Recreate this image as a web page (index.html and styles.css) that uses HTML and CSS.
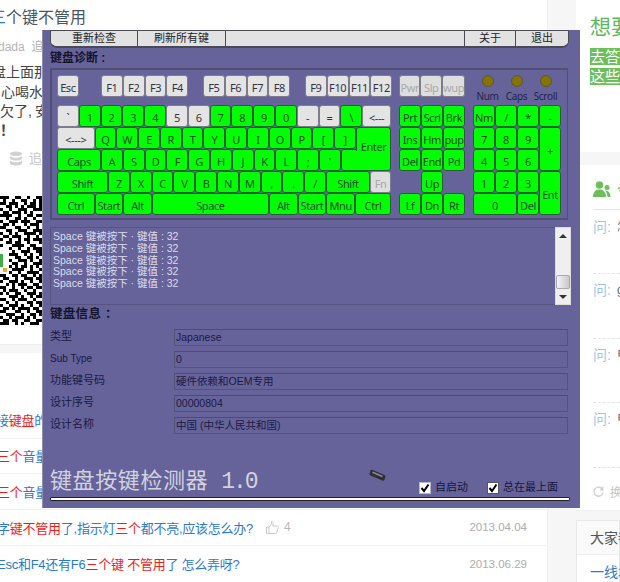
FILE: index.html
```html
<!DOCTYPE html>
<html lang="zh-CN">
<head>
  <meta charset="UTF-8">
  <title>键盘按键检测器</title>
  <link rel="stylesheet" href="styles.css">
</head>
<body>
  <div class="page">
    <main class="main">
      <h1 class="title"><span class="blue">三</span>个键不管用</h1>
      <p class="meta">dada&nbsp;&nbsp;追问</p>
      <div class="para">
        <p class="p1">盘上面那个</p>
        <p class="p2">心喝水不</p>
        <p class="p3">欠了<span class="comma">,</span>安装</p>
        <p class="p4">！</p>
      </div>
      <p class="db">
        <svg width="14" height="15" viewBox="0 0 14 15"><ellipse cx="7" cy="2.8" rx="6" ry="2.3" fill="#d2d2d2"/><path d="M1 5v2.2c0 1.3 2.7 2.300 6 2.300s6-1 6-2.300V5c-1 1.200-3.400 1.800-6 1.800S2 6.200 1 5zM1 9.500v2.700c0 1.300 2.700 2.300 6 2.300s6-1 6-2.300V9.500c-1 1.200-3.400 1.800-6 1.800s-5-.6-6-1.800z" fill="#d2d2d2"/></svg>
        <span>追问</span>
      </p>
      <div class="qr">
        <svg width="42" height="129" viewBox="0 0 42 129" shape-rendering="crispEdges">
          <path fill="none" stroke="#000" stroke-width="3" d="M0 1.500h9M15 1.500h6M27 1.500h3M36 1.500h6M3 4.500h3M12 4.500h3M21 4.500h6M33 4.500h3M39 4.500h3M0 7.500h6M9 7.500h9M24 7.500h3M30 7.500h6M39 7.500h3M6 10.500h6M15 10.500h3M21 10.500h3M27 10.500h9M39 10.500h3M0 13.500h3M9 13.500h3M18 13.500h9M33 13.500h9M3 16.500h6M12 16.500h9M24 16.500h3M30 16.500h3M0 19.500h12M18 19.500h3M27 19.500h6M36 19.500h6M6 22.500h3M15 22.500h6M24 22.500h3M33 22.500h3M0 25.500h3M9 25.500h9M21 25.500h9M36 25.500h6M3 28.500h6M12 28.500h3M24 28.500h3M30 28.500h9M0 31.500h6M15 31.500h6M27 31.500h3M36 31.500h3M6 34.500h6M18 34.500h9M33 34.500h9M0 37.500h3M9 37.500h3M15 37.500h3M24 37.500h12M39 37.500h3M3 40.500h6M12 40.500h9M27 40.500h3M36 40.500h3M0 43.500h3M9 43.500h3M18 43.500h3M24 43.500h6M33 43.500h9M6 46.500h6M15 46.500h6M27 46.500h3M39 46.500h3M0 49.500h3M12 49.500h12M30 49.500h6M9 52.500h3M18 52.500h3M27 52.500h3M33 52.500h9M12 55.500h3M21 55.500h9M36 55.500h6M9 58.500h9M24 58.500h3M30 58.500h3M39 58.500h3M15 61.500h6M27 61.500h6M36 61.500h3M9 64.500h3M18 64.500h9M30 64.500h3M39 64.500h3M12 67.500h6M24 67.500h3M33 67.500h9M9 70.500h3M15 70.500h3M21 70.500h6M30 70.500h3M36 70.500h3M12 73.500h12M30 73.500h3M39 73.500h3M9 76.500h3M18 76.500h3M27 76.500h12M0 79.500h6M12 79.500h6M21 79.500h6M33 79.500h3M39 79.500h3M3 82.500h6M15 82.500h3M24 82.500h9M36 82.500h6M0 85.500h3M9 85.500h9M21 85.500h3M30 85.500h3M39 85.500h3M6 88.500h3M12 88.500h3M18 88.500h9M33 88.500h6M0 91.500h6M12 91.500h3M21 91.500h3M27 91.500h6M36 91.500h6M3 94.500h3M9 94.500h9M24 94.500h3M33 94.500h3M0 97.500h3M6 97.500h3M15 97.500h6M27 97.500h9M39 97.500h3M9 100.500h9M21 100.500h3M30 100.500h3M36 100.500h6M0 103.500h6M12 103.500h3M18 103.500h9M33 103.500h3M6 106.500h3M15 106.500h3M27 106.500h6M36 106.500h6M0 109.500h3M9 109.500h9M21 109.500h3M30 109.500h3M39 109.500h3M3 112.500h6M12 112.500h3M18 112.500h12M33 112.500h6M0 115.500h6M15 115.500h6M27 115.500h3M36 115.500h6M6 118.500h9M21 118.500h3M30 118.500h6M39 118.500h3M0 121.500h3M9 121.500h3M15 121.500h9M27 121.500h3M33 121.500h3M3 124.500h6M12 124.500h6M24 124.500h6M36 124.500h6M0 127.500h9M15 127.500h3M21 127.500h3M30 127.500h9"/>
          <rect x="0" y="58" width="3" height="13" fill="#3fae49"/>
          <rect x="3" y="72" width="4" height="4" fill="#f5a623"/>
        </svg>
      </div>
      <div class="band"></div>
      <ul class="list">
        <li class="row r1"><span class="q">接<b>键盘</b>的</span></li>
        <li class="row r2"><span class="q"><b>三个</b>音量键</span></li>
        <li class="row r3"><span class="q"><b>三个</b>音量键</span></li>
        <li class="row r4">
          <span class="q">字<b>键不管用</b>了,指示灯<b>三个</b>都不亮,应该怎么办?</span>
          <svg class="thumb" width="13" height="13" viewBox="0 0 13 13"><path d="M.5 6h2.500v6.500H.5zM3 6.200l2.500-3V.7c1.500 0 2 1.200 1.600 2.500L6.700 5h4.800c1 0 1.200 1 .8 1.700l-1.600 5c-.2.500-.6.800-1.200.8H3" fill="none" stroke="#c9c9c9"/></svg>
          <span class="count">4</span>
          <span class="date">2013.04.04</span>
        </li>
        <li class="row r5">
          <span class="q">Esc和F4还有F6<b>三个键 不管用</b>了 怎么弄呀?</span>
          <span class="date">2013.06.29</span>
        </li>
      </ul>
    </main>

    <div class="gutter"></div>

    <aside class="side">
      <section class="promo">
        <h2>想要</h2>
        <p><span>去答题</span></p>
        <p><span>这些问</span></p>
      </section>
      <div class="gap gap1"></div>
      <section class="asks">
        <h3>
          <svg width="18" height="16" viewBox="0 0 18 16"><circle cx="6.500" cy="4" r="3.800" fill="#6cc05c"/><path d="M0 16c0-5 2.500-7.500 6.500-7.500S13 11 13 16z" fill="#6cc05c"/><circle cx="14" cy="6.500" r="2.500" fill="#6cc05c"/><path d="M12 9.500c3 0 5.500 2 5.500 6.500h-3c0-3-1-5-2.500-6.500z" fill="#6cc05c"/></svg>
          <span>今日</span>
        </h3>
        <div class="ask first"><i>问:</i> <span>怎么</span></div>
        <div class="ask"><i>问:</i> <span>g</span></div>
        <div class="ask"><i>问:</i> <span>电脑</span></div>
        <div class="ask"><i>问:</i> <span>电脑</span></div>
        <p class="swap">
          <svg width="11" height="11" viewBox="0 0 11 11"><path d="M9.500 3.500A4.500 4.500 0 1 0 10 6.500M9.800 .8v3H7" fill="none" stroke="#d0d0d0" stroke-width="1.300"/></svg>
          <span>换一换</span>
        </p>
      </section>
      <div class="gap gap2"></div>
      <section class="card">
        <h3>大家都</h3>
        <p>一线城</p>
      </section>
    </aside>
  </div>

  <div class="win">
    <div class="bar">
      <button class="tab t1">重新检查</button>
      <button class="tab t2">刷新所有键</button>
      <div class="tab blank"></div>
      <button class="tab t3">关于</button>
      <button class="tab t4">退出</button>
    </div>
    <div class="head">键盘诊断 :</div>

    <div class="kb">
      <div class="kb-main">
        <div class="krow top">
          <span class="k off">Esc</span>
          <div class="fgroup first"><span class="k off">F1</span><span class="k off">F2</span><span class="k off">F3</span><span class="k off">F4</span></div>
          <div class="fgroup"><span class="k off">F5</span><span class="k off">F6</span><span class="k off">F7</span><span class="k off">F8</span></div>
          <div class="fgroup"><span class="k off">F9</span><span class="k off">F10</span><span class="k off">F11</span><span class="k off">F12</span></div>
        </div>
        <div class="krow">
          <span class="k off">`</span><span class="k">1</span><span class="k">2</span><span class="k">3</span><span class="k">4</span><span class="k off">5</span><span class="k off">6</span><span class="k">7</span><span class="k">8</span><span class="k">9</span><span class="k">0</span><span class="k off">-</span><span class="k off">=</span><span class="k">\</span><span class="k off fill">&lt;---</span>
        </div>
        <div class="krow">
          <span class="k off w-tab">&lt;---&gt;</span><span class="k">Q</span><span class="k">W</span><span class="k">E</span><span class="k">R</span><span class="k">T</span><span class="k">Y</span><span class="k">U</span><span class="k">I</span><span class="k">O</span><span class="k">P</span><span class="k">[</span><span class="k">]</span><span class="k fill enter-top">Enter</span>
        </div>
        <div class="krow">
          <span class="k w-caps">Caps</span><span class="k">A</span><span class="k">S</span><span class="k">D</span><span class="k">F</span><span class="k">G</span><span class="k">H</span><span class="k">J</span><span class="k">K</span><span class="k">L</span><span class="k">;</span><span class="k">'</span><span class="k fill enter-low"></span>
        </div>
        <div class="krow">
          <span class="k w-shift">Shift</span><span class="k">Z</span><span class="k">X</span><span class="k">C</span><span class="k">V</span><span class="k">B</span><span class="k">N</span><span class="k">M</span><span class="k">,</span><span class="k">.</span><span class="k">/</span><span class="k w-rshift">Shift</span><span class="k dim fill">Fn</span>
        </div>
        <div class="krow">
          <span class="k w-tab">Ctrl</span><span class="k w-mod">Start</span><span class="k w-mod">Alt</span><span class="k w-space">Space</span><span class="k w-mod">Alt</span><span class="k w-mod">Start</span><span class="k w-mod">Mnu</span><span class="k fill">Ctrl</span>
        </div>
      </div>

      <div class="kb-nav">
        <div class="nav-top"><span class="k dim">Pwr</span><span class="k dim">Slp</span><span class="k dim">wup</span></div>
        <div class="nav-grid">
          <span class="k">Prt</span><span class="k">Scrl</span><span class="k">Brk</span>
          <span class="k">Ins</span><span class="k">Hm</span><span class="k">pup</span>
          <span class="k">Del</span><span class="k">End</span><span class="k">Pd</span>
          <span class="k up">Up</span>
          <span class="k lf">Lf</span><span class="k">Dn</span><span class="k">Rt</span>
        </div>
      </div>

      <div class="kb-num">
        <div class="leds">
          <div class="led"><i></i><span>Num</span></div>
          <div class="led"><i></i><span>Caps</span></div>
          <div class="led"><i></i><span>Scroll</span></div>
        </div>
        <div class="num-grid">
          <span class="k">Nm</span><span class="k">/</span><span class="k">*</span><span class="k">-</span>
          <span class="k">7</span><span class="k">8</span><span class="k">9</span><span class="k tall">+</span>
          <span class="k">4</span><span class="k">5</span><span class="k">6</span>
          <span class="k">1</span><span class="k">2</span><span class="k">3</span><span class="k tall">Ent</span>
          <span class="k wide">0</span><span class="k">Del</span>
        </div>
      </div>
    </div>

    <div class="logwrap">
      <div class="log">
        <div>Space 键被按下 · 键值 : 32</div>
        <div>Space 键被按下 · 键值 : 32</div>
        <div>Space 键被按下 · 键值 : 32</div>
        <div>Space 键被按下 · 键值 : 32</div>
        <div>Space 键被按下 · 键值 : 32</div>
      </div>
      <div class="scroll">
        <span class="arrow a-up"></span>
        <span class="track"></span>
        <span class="grip"></span>
        <span class="arrow a-down"></span>
      </div>
    </div>

    <div class="head info-head">键盘信息 ：</div>
    <div class="info">
      <label>类型</label><div class="field">Japanese</div>
      <label class="small">Sub Type</label><div class="field">0</div>
      <label>功能键号码</label><div class="field">硬件依赖和OEM专用</div>
      <label>设计序号</label><div class="field">00000804</div>
      <label>设计名称</label><div class="field">中国 (中华人民共和国)</div>
    </div>

    <div class="foot">
      <div class="appname">键盘按键检测器<em>1.0</em></div>
      <svg class="chip" width="17" height="13" viewBox="0 0 17 13"><path d="M3 .8l12.500 5.200c1 .5 1.200 1.200.8 2.200l-.9 2.600c-.4 1-1.200 1.300-2.200.8L1.500 6.500C.6 6 .3 5.300.7 4.300l.6-2.500C1.600 1 2.200.5 3 .8z" fill="#2f2f35"/><path d="M3.500 3.200l10 4.300" stroke="#8a8a90" stroke-width="1.500"/></svg>
      <div class="opts">
        <label class="opt"><span class="cb light"><svg width="10" height="10" viewBox="0 0 10 10"><path d="M1.500 5l2.500 3 4.500-6.500" fill="none" stroke="#000" stroke-width="2"/></svg></span>自启动</label>
        <label class="opt"><span class="cb"><svg width="10" height="10" viewBox="0 0 10 10"><path d="M1.500 5l2.500 3 4.500-6.500" fill="none" stroke="#000" stroke-width="2"/></svg></span>总在最上面</label>
      </div>
    </div>
    <div class="rule"></div>
  </div>
</body>
</html>
```

FILE: styles.css
```css
* {
  box-sizing: border-box;
}
html, body {
  margin: 0;
  height: 582px;
  overflow: hidden;
}
body {
  font-family: "Liberation Sans", "Noto Sans CJK SC", sans-serif;
  background-color: #fff;
  color: #333;
  position: relative;
}
h1, h2, h3, p, ul {
  margin: 0;
  padding: 0;
  font-weight: normal;
}
li {
  list-style: none;
}

.page {
  display: flex;
  width: 620px;
  height: 582px;
}
.main {
  width: 547px;
  flex: none;
  overflow: hidden;
}
.gutter {
  width: 29px;
  flex: none;
  background-color: #f6f6f6;
  border-left: 1px solid #efefef;
}
.side {
  flex: 1;
  min-width: 0;
  overflow: hidden;
  white-space: nowrap;
}

.title {
  font-size: 16px;
  line-height: 24px;
  margin: 6px 0 0 -10px;
  color: #4a5560;
}
.blue {
  color: #2b7acb;
}
.meta {
  font-size: 12px;
  line-height: 18px;
  color: #b4b4b4;
  margin: 8px 0 0 -2px;
}
.para {
  margin-top: 7px;
  font-size: 14px;
  color: #444;
  white-space: nowrap;
}
.para p {
  line-height: 19.500px;
}
.p1 {
  margin-left: -8px;
}
.p2 {
  margin-left: 1px;
}
.comma {
  margin-right: 3px;
}
.para .p4 {
  line-height: 17px;
  font-weight: bold;
}
.db {
  display: flex;
  align-items: center;
  gap: 6px;
  margin: 11px 0 0 9px;
  font-size: 13px;
  line-height: 18px;
  color: #c4c4c4;
}
.qr {
  margin-top: 28px;
  height: 129px;
}
.qr svg {
  display: block;
}
.band {
  height: 9px;
  margin-top: 19px;
  background-color: #f6f6f6;
  border-top: 1px solid #eee;
}
.list {
  margin-top: 47px;
}
.row {
  display: flex;
  align-items: center;
  padding-right: 20px;
  white-space: nowrap;
  border-bottom: 1px solid #f2f2f2;
  font-size: 13px;
  letter-spacing: -.25px;
  color: #2b7acb;
}
.row b {
  font-weight: normal;
  color: #f01c1c;
}
.r1 { height: 39px; padding-top: 2px; }
.r2 { height: 35px; }
.r3 { height: 36px; }
.r4 { height: 36px; }
.r5 { height: 36px; border-bottom: 0; }
.r1 .q { margin-left: -4px; }
.r2 .q, .r3 .q { margin-left: -3px; }
.r4 .q { margin-left: -3px; }
.r5 .q { margin-left: -3px; }
.thumb {
  flex: none;
  margin-left: 13px;
}
.count {
  margin-left: 5px;
  color: #b8b8b8;
  font-size: 12px;
}
.date {
  margin-left: auto;
  font-size: 11.500px;
  letter-spacing: 0;
  color: #adadad;
}

.promo {
  height: 152px;
  padding: 14px 0 0 14px;
  font-size: 15px;
  line-height: 20px;
}
.promo h2 {
  font-size: 21px;
  line-height: 26px;
  color: #5cb85c;
  margin-bottom: 7px;
}
.promo span {
  background-color: #6cc05c;
  color: #fff;
}
.gap {
  background-color: #f6f6f6;
}
.gap1 {
  height: 13px;
}
.gap2 {
  height: 10px;
  border-top: 1px solid #eee;
}
.asks {
  height: 345px;
  padding: 15px 0 0 17px;
}
.asks h3 {
  display: flex;
  align-items: center;
  gap: 6px;
  height: 17px;
  margin-bottom: 12px;
  font-size: 13px;
  color: #5cb85c;
}
.asks h3 svg {
  flex: none;
}
.ask {
  display: flex;
  gap: 7px;
  height: 64.500px;
  padding-top: 8px;
  border-bottom: 1px dashed #e4e4e4;
  font-size: 12px;
  line-height: 16px;
  color: #666;
}
.ask.first {
  height: 65px;
  padding-top: 9px;
  border-top: 1px solid #e8e8e8;
}
.ask i {
  flex: none;
  width: 17px;
  font-style: normal;
  font-size: 14px;
  color: #9fc4f0;
}
.swap {
  display: flex;
  align-items: center;
  gap: 6px;
  margin-top: 15px;
  font-size: 12px;
  color: #c4c4c4;
}
.swap svg {
  flex: none;
}
.card {
  height: 62px;
  border: 1px solid #e8e8e8;
  border-bottom: 0;
}
.card h3 {
  height: 34px;
  line-height: 34px;
  padding-left: 13px;
  font-size: 14px;
  color: #555;
  background-color: #fafafa;
  border-bottom: 1px solid #eee;
}
.card p {
  padding: 6px 0 0 13px;
  font-size: 14px;
  color: #2b7acb;
}

/* tool window over the page */
.win {
  position: absolute;
  left: 42px;
  top: 30px;
  width: 538px;
  height: 478px;
  padding: 0 11px 0 8px;
  background-color: #65639a;
  border-left: 1px solid #8f8fa8;
}
.bar {
  display: flex;
  height: 18px;
  background-color: #e0e0e0;
  border: 1px solid #4a4a55;
  border-bottom-width: 2px;
  border-radius: 0 0 7px 7px;
  overflow: hidden;
  margin-left: -1px;
}
.tab {
  height: 100%;
  margin: 0;
  padding: 0;
  border: 0;
  border-right: 1px solid #4a4a55;
  background: #e2e2e2;
  font-family: inherit;
  font-size: 11px;
  line-height: 15px;
  color: #222;
}
.t1 { width: 87px; }
.t2 { width: 88px; }
.blank { flex: 1; }
.t3 { width: 51px; }
.t4 { width: 52px; border-right: 0; }

.head {
  height: 20px;
  line-height: 20px;
  font-size: 12px;
  font-weight: bold;
  color: #14142c;
  margin-left: -1px;
}

.kb {
  display: flex;
  gap: 8px;
  width: 518px;
  height: 152px;
  margin-left: -1px;
  padding: 5px 0 0 5px;
  border: 2px solid #514f74;
  border-right-width: 1px;
}
.kb-main {
  width: 334px;
  flex: none;
}
.krow {
  display: flex;
  height: 22px;
}
.krow.top {
  margin-bottom: 8px;
}
.fgroup {
  display: flex;
  margin-left: 14.800px;
}
.fgroup.first {
  margin-left: 22.200px;
}
.k {
  position: relative;
  display: flex;
  align-items: center;
  justify-content: center;
  width: 21.800px;
  flex: none;
  padding-top: 2px;
  background-color: #00ff00;
  border: 1px solid #2d5c3c;
  border-radius: 3px;
  font-family: "Noto Sans", sans-serif;
  font-size: 11px;
  color: #1f4a28;
  line-height: 1;
  letter-spacing: -.4px;
  white-space: nowrap;
}
.k.off {
  background-color: #e4e4e4;
  border-color: #7c7c8c;
  color: #333340;
}
.k.dim {
  background-color: #dedede;
  border-color: #7c7c8c;
  color: #a8a8a8;
}
.k.fill {
  flex: 1;
  width: auto;
}
.w-tab { width: 37.500px; }
.w-caps { width: 44px; }
.w-shift { width: 51px; }
.w-rshift { width: 44px; }
.w-mod { width: 28.700px; }
.w-space { width: 117px; }
.enter-top {
  z-index: 1;
  height: 24px;
  padding-top: 14px;
  border-bottom: 0;
  border-radius: 3px 3px 0 0;
}
.enter-low {
  border-top-right-radius: 0;
}

.kb-nav {
  width: 66px;
  flex: none;
}
.nav-top {
  display: grid;
  grid-template-columns: repeat(3, 1fr);
  height: 22px;
  margin-bottom: 8px;
}
.nav-top .k {
  width: auto;
}
.nav-grid {
  display: grid;
  grid-template-columns: repeat(3, 1fr);
  grid-auto-rows: 22px;
}
.nav-grid .k {
  width: auto;
}
.nav-grid .up {
  grid-column: 2;
}
.nav-grid .lf {
  grid-column: 1;
}

.kb-num {
  width: 88px;
  flex: none;
}
.leds {
  display: grid;
  grid-template-columns: repeat(3, 29px);
  height: 30px;
}
.led {
  display: flex;
  flex-direction: column;
  align-items: center;
  gap: 2px;
  font-family: "Noto Sans", sans-serif;
  font-size: 10px;
  letter-spacing: -.3px;
  color: #24244a;
}
.led i {
  width: 12px;
  height: 12px;
  border-radius: 50%;
  background-color: #857400;
  border: 1px solid #5a5540;
}
.num-grid {
  display: grid;
  grid-template-columns: repeat(4, 1fr);
  grid-auto-rows: 22px;
}
.num-grid .k {
  width: auto;
}
.num-grid .tall {
  grid-row: span 2;
}
.num-grid .wide {
  grid-column: span 2;
}

.logwrap {
  display: flex;
  height: 78px;
  margin: 7px -2px 0 -1px;
}
.log {
  flex: 1;
  padding: 3px 0 0 2px;
  border: 1px solid #57557f;
  border-right: 0;
  font-size: 10.500px;
  line-height: 11.800px;
  color: #dcdce8;
}
.scroll {
  display: flex;
  flex-direction: column;
  width: 16px;
  background-color: #efefef;
  border: 1px solid #dcdcdc;
}
.arrow {
  position: relative;
  height: 15px;
  flex: none;
}
.arrow::after {
  content: "";
  position: absolute;
  left: 3px;
  border: 4px solid transparent;
}
.a-up::after {
  top: 2px;
  border-bottom-color: #333;
}
.a-down::after {
  top: 6px;
  border-top-color: #333;
}
.track {
  flex: 1;
}
.grip {
  height: 14px;
  flex: none;
  background: linear-gradient(90deg, #f4f4f4, #c8c8c8);
  border: 1px solid #aaa;
  border-radius: 2px;
}

.info-head {
  height: 24px;
  line-height: 18px;
  font-size: 12.500px;
  letter-spacing: .3px;
}
.info {
  display: grid;
  grid-template-columns: 124px 394px;
  grid-auto-rows: 17px;
  row-gap: 5px;
  margin-left: -1px;
  font-size: 11px;
  color: #1c1a44;
}
.info label {
  line-height: 15px;
}
.info .small {
  font-size: 10px;
}
.field {
  padding-left: 1px;
  border: 1px solid #55537c;
  border-top-color: #4d4b72;
  line-height: 15px;
  font-size: 10.500px;
}

.foot {
  position: relative;
  display: flex;
  align-items: flex-end;
  justify-content: space-between;
  height: 63px;
  margin-left: -1px;
  padding-bottom: 2px;
}
.appname {
  font-size: 22px;
  line-height: 26px;
  letter-spacing: .6px;
  color: #d2d2de;
  white-space: nowrap;
}
.appname em {
  margin-left: 13px;
  font-family: "Liberation Mono", monospace;
  font-style: normal;
  font-size: 23px;
  letter-spacing: -2px;
}
.chip {
  position: absolute;
  left: 319px;
  top: 35px;
}
.opts {
  display: flex;
  gap: 19px;
  padding: 0 11px 1px 0;
}
.opt {
  display: flex;
  align-items: center;
  gap: 4px;
  font-size: 11px;
  line-height: 13px;
  color: #16163a;
}
.cb {
  display: flex;
  align-items: center;
  justify-content: center;
  width: 12px;
  height: 12px;
  background-color: #fff;
  border: 1px solid #55555f;
}
.cb.light {
  border-color: #b8b8c8;
}
.rule {
  width: 520px;
  height: 4px;
  margin-left: -1px;
  background-color: #fff;
  border: 1px solid #222;
  border-radius: 1px;
}
```
